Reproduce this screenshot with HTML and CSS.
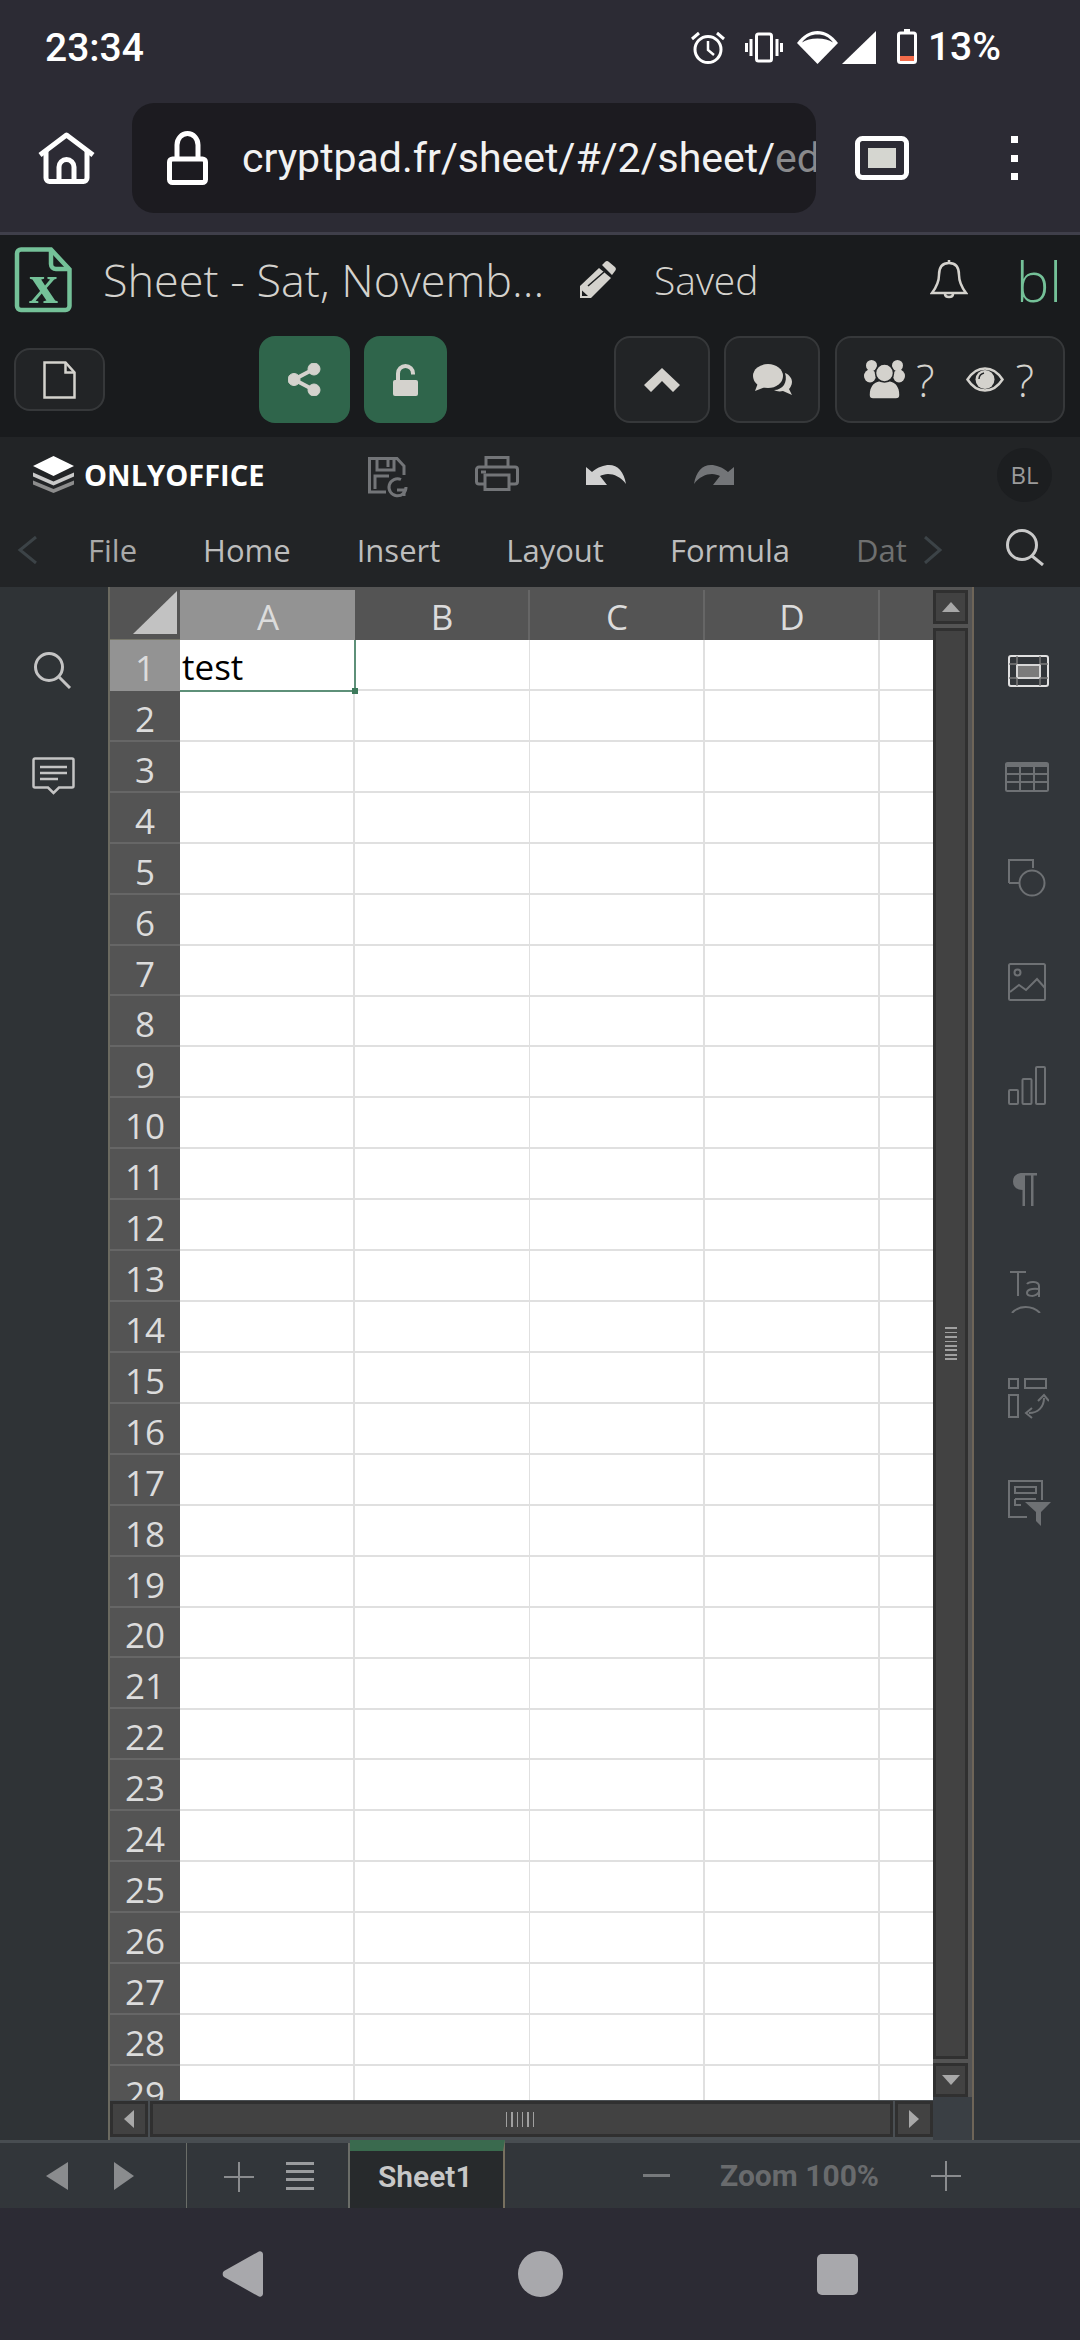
FILE: index.html
```html
<!DOCTYPE html>
<html lang="en">
<head>
<meta charset="utf-8">
<title>Sheet</title>
<link rel="stylesheet" href="styles.css">
</head>
<body>
<header class="status">
  <span class="time">23:34</span>
  <div class="status-icons">
    <svg class="s-alarm" width="36" height="33" viewBox="0 0 36 33" fill="none" stroke="#fff" stroke-width="3"><circle cx="18" cy="18.500" r="13"/><path d="M18 10v9l6 5" stroke-width="2.500"/><path d="M2 8l7-6M34 8l-7-6"/></svg>
    <svg class="s-vib" width="38" height="31" viewBox="0 0 38 31" fill="none" stroke="#fff" stroke-width="3"><rect x="11.500" y="2" width="15" height="27" rx="2"/><path d="M6 7v17M32 7v17M1.500 11v9M36.500 11v9"/></svg>
    <svg class="s-wifi" width="41" height="33" viewBox="0 0 41 33"><path d="M20.500 33 0 12C6 4 13 0 20.500 0S35 4 41 12z" fill="#fff"/><path d="M5 11.500C9 6 14 3.500 20.500 3.500S32 6 36 11.500C32 9 27 7.500 20.500 7.500S9 9 5 11.500z" fill="#2c2b34"/></svg>
    <svg class="s-sig" width="34" height="33" viewBox="0 0 34 33"><path d="M34 0v33H0z" fill="#fff"/></svg>
    <svg class="s-bat" width="20" height="35" viewBox="0 0 20 35" fill="none"><path d="M7 0h6v3H7z" fill="#fff"/><rect x="1.500" y="4" width="17" height="29.500" rx="2" stroke="#fff" stroke-width="3"/><rect x="3" y="27" width="14" height="5" fill="#f26b4a"/></svg>
    <span class="pct">13%</span>
  </div>
</header>
<nav class="addr">
  <svg class="a-home" width="57" height="52" viewBox="0 0 57 52" fill="none" stroke="#fff" stroke-width="5" stroke-linejoin="round"><path d="M2 23 28.500 3 55 23"/><path d="M8 19v27a3.500 3.500 0 0 0 3.500 3.500h34A3.500 3.500 0 0 0 49 46V19"/><path d="M21 49V35a7.500 7.500 0 0 1 15 0v14"/></svg>
  <div class="url">
    <svg class="a-lock" width="41" height="54" viewBox="0 0 41 54" fill="none" stroke="#fff" stroke-width="5"><path d="M10 28V14a10.500 11.500 0 0 1 21 0v14"/><rect x="2.500" y="28" width="36" height="23.500" rx="3"/></svg>
    <span class="url-text">cryptpad.fr/sheet/#/2/sheet/<span class="url-fade">ed</span></span>
  </div>
  <svg class="a-tab" width="54" height="44" viewBox="0 0 54 44"><rect x="2.500" y="2.500" width="49" height="39" rx="5" fill="none" stroke="#fff" stroke-width="5"/><rect x="13" y="12" width="28" height="20" fill="#d5d6d0"/></svg>
  <div class="a-dots"><i></i><i></i><i></i></div>
</nav>
<div class="chrome-line"></div>

<section class="cp">
  <div class="cp-top">
    <svg class="c-file" width="57" height="65" viewBox="0 0 57 65" fill="none" stroke="#74c198" stroke-width="4.500"><path d="M7 2.500h29l18.500 20V59a4 4 0 0 1-4 4H6a4 4 0 0 1-4-4V6.500a4 4 0 0 1 4-4z"/><path d="M36 2.500V17a5 5 0 0 0 5 5h13.500"/><text x="28.500" y="56" text-anchor="middle" class="c-x">x</text></svg>
    <span class="c-title">Sheet - Sat, Novemb...</span>
    <svg class="c-pen" width="36" height="37" viewBox="0 0 36 37"><path d="M22 4l3-3a3 3 0 0 1 4 0l6 5a3 3 0 0 1 0 4l-3 4z" fill="#d4d2cd"/><path d="M19 7l12 10-20 20H0V25z" fill="#d4d2cd"/><path d="M8 25 24 11" stroke="#191b1d" stroke-width="1.500"/><path d="M2 29.500V35h6z" fill="#191b1d"/></svg>
    <span class="c-saved">Saved</span>
    <svg class="c-bell" width="38" height="42" viewBox="0 0 38 42" fill="none" stroke="#d4d2cd" stroke-width="2.500"><path d="M19 4c-7 0-10 5-10 12 0 8-4 14-7 18h34c-3-4-7-10-7-18 0-7-3-12-10-12z"/><path d="M19 1v3M15 35c0 4 8 4 8 0"/></svg>
    <span class="c-user">bl</span>
  </div>
  <div class="cp-bot">
    <div class="btn b-doc"><svg width="33" height="38" viewBox="0 0 33 38" fill="none" stroke="#d4d2cd" stroke-width="2.500"><path d="M1.500 1.500h21l9 10v25h-30z"/><path d="M22.500 1.500v10h9"/></svg></div>
    <div class="btn-g b-share"><svg width="33" height="33" viewBox="0 0 33 33" fill="#d4d2cd" stroke="#d4d2cd"><circle cx="6" cy="16.500" r="6"/><circle cx="26" cy="6" r="6"/><circle cx="26" cy="27" r="6"/><path d="M6 16.500 26 6M6 16.500 26 27" stroke-width="4"/></svg></div>
    <div class="btn-g b-lock"><svg width="25" height="32" viewBox="0 0 25 32"><path d="M5 17V9.500a7.500 7.500 0 0 1 15 0v1" fill="none" stroke="#d4d2cd" stroke-width="4"/><rect y="16" width="25" height="16" rx="2" fill="#d4d2cd"/></svg></div>
    <div class="btn b-up"><svg width="36" height="24" viewBox="0 0 36 24"><path d="M18 0l18 17-7 7-11-11L7 24l-7-7z" fill="#d4d2cd"/></svg></div>
    <div class="btn b-chat"><svg width="39" height="31" viewBox="0 0 39 31" fill="#d4d2cd"><ellipse cx="15" cy="12" rx="15" ry="12"/><path d="M5 19l-3 8 10-4z"/><path d="M32 9c5 2 7 6 7 9 0 3-2 6-3 7l3 6-9-4c-4 1-7 0-9-1 9 0 14-8 11-17z"/></svg></div>
    <div class="btn b-users">
      <svg width="41" height="39" viewBox="0 0 41 39" fill="#d4d2cd"><circle cx="7.500" cy="5.500" r="5.500"/><circle cx="33.500" cy="5.500" r="5.500"/><ellipse cx="6" cy="16" rx="6" ry="6.500"/><ellipse cx="35" cy="16" rx="6" ry="6.500"/><path d="M5 35C5 25 11 20 20.500 20S36 25 36 35c0 3-1.500 4-4 4H9c-2.500 0-4-1-4-4z" stroke="#222426" stroke-width="1.500"/><circle cx="20.500" cy="13" r="9" stroke="#222426" stroke-width="1.500"/></svg>
      <span class="q q1">?</span>
      <svg class="eye" width="38" height="25" viewBox="0 0 38 25" fill="none" stroke="#d4d2cd" stroke-width="2.500"><path d="M1.500 12.500C7 4 13 1.500 19 1.500s12 2.500 17.500 11C31 21 25 23.500 19 23.500S7 21 1.500 12.500z"/><circle cx="19" cy="12.500" r="9.500" fill="#d4d2cd" stroke="none"/><path d="M13 12a6.500 6.500 0 0 1 5-6" stroke="#222426" stroke-width="1.500"/></svg>
      <span class="q q2">?</span>
    </div>
  </div>
</section>

<section class="oo">
  <div class="oo-top">
    <svg class="o-logo" width="41" height="37" viewBox="0 0 41 37"><path d="M20.500 0 41 10 20.500 20 0 10z" fill="#fff"/><path d="M0 16.500l20.500 9 20.500-9v4l-20.500 9-20.500-9z" fill="#c9c9c9"/><path d="M0 24.500l20.500 8.500 20.500-8.500v4L20.500 37 0 28.500z" fill="#8c8c8c"/></svg>
    <span class="o-name">ONLYOFFICE</span>
    <svg class="o-save" width="42" height="41" viewBox="0 0 42 41" fill="none" stroke="#737578" stroke-width="3"><path d="M18 35H1.500V1.500H29L36 9v9"/><path d="M9 2v11h17V2M20 3v7"/><path d="M7 32V19h14"/><path d="M38 30a8.500 8.500 0 1 1-5-7.500"/><path d="M36 39v-6h-7" stroke-width="3"/></svg>
    <svg class="o-print" width="44" height="35" viewBox="0 0 44 35" fill="none" stroke="#737578" stroke-width="3"><path d="M11 11V1.500h22V11M10 28H4a2.500 2.500 0 0 1-2.500-2.500v-12A2.500 2.500 0 0 1 4 11h36a2.500 2.500 0 0 1 2.500 2.500v12A2.500 2.500 0 0 1 40 28h-6"/><rect x="10" y="19" width="24" height="14.500"/><path d="M6 16h5"/></svg>
    <svg class="o-undo" width="40" height="20" viewBox="0 0 40 20"><path d="M0 20V2l6 5C12 2 18 0 23 0c9 0 15 7 17 19-5-7-12-10-18-10-3 0-6 1-8 2l7 9z" fill="#d0d0d0"/></svg>
    <svg class="o-redo" width="40" height="20" viewBox="0 0 40 20"><path d="M40 20V2l-6 5C28 2 22 0 17 0 8 0 2 7 0 19c5-7 12-10 18-10 3 0 6 1 8 2l-7 9z" fill="#737578"/></svg>
    <span class="o-bl">BL</span>
  </div>
  <div class="oo-tabs">
    <svg class="t-l" width="21" height="28" viewBox="0 0 21 28" fill="none" stroke="#3c4347" stroke-width="3"><path d="M19 1 3 14l16 13"/></svg>
    <div class="t-list">
      <span class="t t-dim">File</span><span class="t">Home</span><span class="t">Insert</span><span class="t">Layout</span><span class="t">Formula</span><span class="t t-fade">Dat</span>
    </div>
    <svg class="t-r" width="19" height="28" viewBox="0 0 19 28" fill="none" stroke="#3c4347" stroke-width="3"><path d="M2 1l15 13L2 27"/></svg>
    <svg class="t-s" width="40" height="37" viewBox="0 0 40 37" fill="none" stroke="#c9c9c9" stroke-width="3"><circle cx="17" cy="16" r="14.500"/><path d="M27 27l11 9"/></svg>
  </div>
</section>

<main class="main">
  <aside class="left">
    <svg class="l-search" width="38" height="37" viewBox="0 0 38 37" fill="none" stroke="#c4c4c4" stroke-width="3"><circle cx="15" cy="15" r="13.500"/><path d="M25 25l11 11"/></svg>
    <svg class="l-comment" width="43" height="38" viewBox="0 0 43 38" fill="none" stroke="#c4c4c4" stroke-width="2.500"><path d="M3 1.500h37A1.500 1.500 0 0 1 41.500 3v26a1.500 1.500 0 0 1-1.500 1.500H27L21.500 36 16 30.500H3A1.500 1.500 0 0 1 1.500 29V3A1.500 1.500 0 0 1 3 1.500z"/><path d="M8 10h27M8 16h27M8 22h18"/></svg>
  </aside>
  <div class="frame">
    <div class="grid">
      <div class="head">
        <div class="corner"><svg width="44" height="43" viewBox="0 0 44 43"><path d="M44 0v43H0z" fill="#c2c2c2"/></svg></div>
        <div class="col col-on">A</div><div class="col">B</div><div class="col">C</div><div class="col">D</div><div class="col col-e"></div>
      </div>
      <div class="body">
        <div class="rows">
          <div class="r r-on">1</div><div class="r">2</div><div class="r">3</div><div class="r">4</div><div class="r">5</div><div class="r">6</div><div class="r">7</div><div class="r">8</div><div class="r">9</div><div class="r">10</div><div class="r">11</div><div class="r">12</div><div class="r">13</div><div class="r">14</div><div class="r">15</div><div class="r">16</div><div class="r">17</div><div class="r">18</div><div class="r">19</div><div class="r">20</div><div class="r">21</div><div class="r">22</div><div class="r">23</div><div class="r">24</div><div class="r">25</div><div class="r">26</div><div class="r">27</div><div class="r">28</div><div class="r">29</div>
        </div>
        <div class="cells">
          <div class="a1">test<i class="handle"></i></div>
        </div>
      </div>
      <div class="hs">
        <div class="sb"><svg width="10" height="18" viewBox="0 0 10 18"><path d="M10 0v18L0 9z" fill="#a8a8a8"/></svg></div>
        <div class="sb thumb-h"><div class="grip-h"></div></div>
        <div class="sb"><svg width="10" height="18" viewBox="0 0 10 18"><path d="M0 0v18l10-9z" fill="#a8a8a8"/></svg></div>
      </div>
    </div>
    <div class="vs">
      <div class="sb sb-v"><svg width="18" height="10" viewBox="0 0 18 10"><path d="M0 10h18L9 0z" fill="#a8a8a8"/></svg></div>
      <div class="sb thumb-v"><div class="grip-v"></div></div>
      <div class="sb sb-v"><svg width="18" height="10" viewBox="0 0 18 10"><path d="M0 0h18L9 10z" fill="#a8a8a8"/></svg></div>
    </div>
  </div>
  <aside class="right">
    <svg class="ri ri-1" width="41" height="32" viewBox="0 0 41 32" fill="none"><rect x="1" y="1" width="39" height="30" rx="2" stroke="#e0e0e0" stroke-width="2"/><rect x="9" y="10" width="23" height="13" fill="#7b7b7b" stroke="#d6d6d6" stroke-width="2"/><path d="M9 1v8M32 1v8M9 23v8M32 23v8M1 9h8M32 9h8M1 23h8M32 23h8" stroke="#7b7b7b" stroke-width="1.500"/></svg>
    <svg class="ri ri-2" width="44" height="30" viewBox="0 0 44 30" fill="none" stroke="#6e7174" stroke-width="2"><rect x="1" y="1" width="42" height="28" rx="1.500"/><path d="M1 3h42" stroke-width="4"/><path d="M1 12h42M1 20h42M15 4v25M29 4v25"/></svg>
    <svg class="ri ri-3" width="38" height="38" viewBox="0 0 38 38" fill="none" stroke="#6e7174" stroke-width="2"><path d="M1 24V1h24v8"/><path d="M1 24h10"/><circle cx="24" cy="24" r="12.500"/></svg>
    <svg class="ri ri-4" width="38" height="38" viewBox="0 0 38 38" fill="none" stroke="#6e7174" stroke-width="2"><rect x="1" y="1" width="36" height="36" rx="1.500"/><circle cx="9.500" cy="9.500" r="3"/><path d="M2 29l9-7 7 5 11-11 8 9"/></svg>
    <svg class="ri ri-5" width="38" height="39" viewBox="0 0 38 39" fill="none" stroke="#6e7174" stroke-width="2"><rect x="1" y="24" width="9" height="14" rx="1"/><rect x="14.500" y="13" width="9" height="25" rx="1"/><rect x="28" y="1" width="9" height="37" rx="1"/></svg>
    <svg class="ri ri-6" width="24" height="33" viewBox="0 0 24 33" fill="#6e7174"><path d="M24 0v2.500h-3.500V33H18V2.500h-6V33H9.500V17C4 17 0 14 0 8.500S4 0 9.500 0z"/></svg>
    <svg class="ri ri-7" width="32" height="43" viewBox="0 0 32 43" fill="none" stroke="#6e7174" stroke-width="2"><path d="M0 2h16M8 2v24"/><path d="M17 14c2-3 12-3 12 2v11M29 19c-8-1-12 1-12 4s8 5 12-1"/><path d="M2 43c7-8 20-8 28 0"/></svg>
    <svg class="ri ri-8" width="41" height="41" viewBox="0 0 41 41" fill="none" stroke="#6e7174" stroke-width="2"><rect x="1" y="1" width="9" height="9"/><rect x="17" y="1" width="21" height="9"/><rect x="1" y="17" width="9" height="22"/><path d="M36 20c0 9-6 15-15 15"/><path d="M30 23l6-6 5 6M24 30l-6 5 6 5"/></svg>
    <svg class="ri ri-9" width="43" height="46" viewBox="0 0 43 46" fill="none" stroke="#6e7174" stroke-width="2"><path d="M34 20V1H1v36h18"/><path d="M7 7h21v6H7zM7 19h21M7 19v6h6"/><path d="M17 22h26L33 32v14l-5-5v-9z" fill="#6e7174" stroke="none"/></svg>
  </aside>
</main>

<footer class="bar">
  <div class="bar-nav">
    <svg width="22" height="28" viewBox="0 0 22 28"><path d="M22 0v28L0 14z" fill="#8a8c8e"/></svg>
    <svg class="bar-next" width="20" height="28" viewBox="0 0 20 28"><path d="M0 0v28l20-14z" fill="#8a8c8e"/></svg>
  </div>
  <div class="bar-tools">
    <svg width="30" height="30" viewBox="0 0 30 30" fill="none" stroke="#8a8c8e" stroke-width="2"><path d="M15 0v30M0 15h30"/></svg>
    <svg width="28" height="28" viewBox="0 0 28 28" fill="#9a9c9e"><path d="M0 0h28v3H0zM0 8h28v3H0zM0 16h28v3H0zM0 25h28v3H0z"/></svg>
  </div>
  <div class="sheet-tab"><span>Sheet1</span></div>
  <div class="zoom">
    <i class="z-minus"></i>
    <span class="z-text">Zoom 100%</span>
    <svg width="30" height="30" viewBox="0 0 30 30" fill="none" stroke="#8a8c8e" stroke-width="2"><path d="M15 0v30M0 15h30"/></svg>
  </div>
</footer>

<div class="sysnav">
  <svg class="n-back" width="41" height="46" viewBox="0 0 41 46"><path d="M41 3v40a3 3 0 0 1-5 2L2 26a4 4 0 0 1 0-6L36 1a3 3 0 0 1 5 2z" fill="#a8a8ac"/></svg>
  <i class="n-home"></i>
  <i class="n-rec"></i>
</div>
</body>
</html>
```
FILE: styles.css
```css
* { box-sizing: border-box; }
html, body { margin: 0; padding: 0; }
body { width: 1080px; height: 2340px; overflow: hidden; display: flex; flex-direction: column; background: #2c2b34; font-family: "Open Sans", sans-serif; }
svg { display: block; flex: none; }
i { display: block; }

.status { height: 84px; padding: 10px 79px 0 45px; display: flex; align-items: center; justify-content: space-between; color: #fff; font-family: Roboto, sans-serif; font-size: 39px; font-weight: 500; background: #2c2b34; }
.time { margin-top: 2px; }
.status-icons { display: flex; align-items: center; }
.s-vib { margin-left: 19px; }
.s-wifi { margin-left: 14px; }
.s-sig { margin-left: 4px; }
.s-bat { margin-left: 21px; margin-top: -1px; }
.pct { margin-left: 11px; }

.addr { height: 148px; display: flex; align-items: center; padding-left: 38px; background: #2c2b34; }
.url { width: 684px; height: 110px; margin-left: 37px; background: #1c1b20; border-radius: 22px; display: flex; align-items: center; padding-left: 35px; overflow: hidden; white-space: nowrap; }
.url-text { margin-left: 34px; color: #f2f2f2; font-family: Roboto, sans-serif; font-size: 41px; }
.url-fade { color: #8a8a8c; }
.a-tab { margin-left: 39px; }
.a-dots { margin-left: 102px; width: 7px; height: 44px; display: flex; flex-direction: column; justify-content: space-between; }
.a-dots i { width: 7px; height: 7px; background: #fff; }
.chrome-line { height: 3px; background: #3f3f4a; }

.cp { height: 202px; background: #191b1d; color: #d4d2cd; }
.cp-top { height: 101px; display: flex; align-items: center; padding: 0 0 12px 15px; }
.c-file { overflow: visible; }
.c-x { font-family: "Liberation Serif", serif; font-size: 58px; font-weight: 700; fill: #74c198; stroke: none; }
.c-title { margin-left: 31px; width: 477px; flex: none; font-size: 45px; font-weight: 300; white-space: nowrap; }
.c-saved { margin-left: 38px; width: 276px; flex: none; font-size: 39px; font-weight: 300; }
.c-bell { margin-right: 48px; }
.c-user { color: #74c198; font-size: 56px; font-weight: 300; line-height: 56px; }
.cp-bot { height: 87px; display: flex; align-items: center; padding-left: 14px; }
.btn, .btn-g { display: flex; align-items: center; justify-content: center; height: 87px; border-radius: 16px; }
.btn { background: #222426; border: 2px solid #36383a; }
.btn-g { background: #2f654b; }
.b-doc { width: 91px; height: 63px; }
.b-share { width: 91px; margin-left: 154px; }
.b-lock { width: 83px; margin-left: 14px; }
.b-up { width: 96px; margin-left: 167px; }
.b-chat { width: 96px; margin-left: 14px; }
.b-users { width: 230px; margin-left: 15px; justify-content: flex-start; padding-left: 27px; }
.q { font-size: 44px; font-weight: 300; line-height: 44px; margin-left: 11px; }
.eye { margin-left: 31px; }
.q2 { margin-left: 12px; }

.oo { height: 150px; background: #222426; }
.oo-top { height: 75px; display: flex; align-items: center; padding-left: 33px; }
.o-name { margin-left: 10px; width: 103px; flex: none; color: #fff; font-size: 29px; font-weight: 700; white-space: nowrap; }
.o-save { margin-left: 181px; margin-top: 5px; }
.o-print { margin-left: 65px; margin-top: -3px; }
.o-undo { margin-left: 67px; }
.o-redo { margin-left: 68px; }
.o-bl { margin-left: 263px; width: 55px; height: 54px; border-radius: 50%; background: #1c1e20; color: #9b9b9b; font-size: 24px; display: flex; align-items: center; justify-content: center; }
.oo-tabs { height: 75px; display: flex; align-items: center; padding-left: 17px; }
.t-list { flex: none; margin-left: 50px; width: 818px; display: flex; gap: 66px; font-size: 31px; color: #bdbdbd; }
.t-dim { color: #a9a9a9; }
.t-fade { color: #6f7070; }
.t-r { margin-left: 17px; margin-right: 63px; }
.t-s { margin-top: -4px; }

.main { height: 1553px; display: flex; background: #32363a; }
.left { width: 108px; flex: none; padding: 65px 0 0 33px; background: #2f3336; }
.l-search { margin-left: 1px; }
.l-comment { margin-top: 68px; margin-left: -1px; }
.frame { width: 866px; flex: none; display: flex; padding-top: 3px; background: #545454; border-left: 2px solid #6b6a60; border-right: 2px solid #6e6558; }
.grid { width: 823px; flex: none; display: flex; flex-direction: column; }
.head { height: 50px; display: flex; color: #dcdcdc; font-size: 35px; }
.corner { width: 70px; flex: none; padding: 1px 0 0 23px; border-bottom: 1px solid #76766a; }
.col { width: 175px; flex: none; background: #545454; border-right: 2px solid #666; display: flex; align-items: center; justify-content: center; padding-top: 3px; padding-left: 1px; }
.col-on { background: #939393; border-right: 0; }
.col-e { width: 54px; border: 0; }
.body { flex: 1; display: flex; overflow: hidden; min-height: 0; }
.rows { width: 70px; flex: none; background: #545454; color: #dcdcdc; font-size: 35px; }
.r { height: 50.93px; display: flex; align-items: center; justify-content: center; border-bottom: 2px solid #666; padding-top: 6px; }
.r-on { background: #939393; border-bottom-color: #939393; }
.cells { flex: 1; position: relative; background-color: #fff; background-image: repeating-linear-gradient(to right, transparent 0 173.5px, #e0e0e0 173.5px 175px), repeating-linear-gradient(to bottom, transparent 0 48.93px, #e0e0e0 48.93px 50.93px); }
.a1 { position: absolute; left: 0; top: 0; width: 175.5px; height: 52px; border-right: 2px solid #5e9079; border-bottom: 2px solid #5e9079; background: #fff; color: #000; font-size: 35px; line-height: 54px; padding-left: 2px; }
.handle { position: absolute; right: -4px; bottom: -4px; width: 6px; height: 6px; background: #3d7a5c; }
.hs { height: 40px; flex: none; display: flex; gap: 2px; padding: 1px 0 3px 0; background: #4a4f53; }
.sb { background: #424242; border: 3px solid #303030; display: flex; align-items: center; justify-content: center; }
.hs .sb { width: 38px; height: 36px; }
.hs .thumb-h { width: 743px; }
.grip-h { width: 32px; height: 15px; background: repeating-linear-gradient(to right, #a0a0a0 0 1.500px, transparent 1.500px 5.300px); }
.vs { width: 39px; flex: none; display: flex; flex-direction: column; padding: 0 4px 43px 0; gap: 4px; background: linear-gradient(to bottom, #545454 0 1507px, #3a3f44 1507px); }
.sb-v { height: 34px; flex: none; }
.thumb-v { flex: 1; }
.grip-v { width: 12px; height: 33px; background: repeating-linear-gradient(to bottom, #a0a0a0 0 1.500px, transparent 1.500px 4.500px); }
.right { flex: 1; padding: 68px 0 0 34px; background: #32363a; }
.ri-2 { margin-top: 75px; margin-left: -3px; }
.ri-3 { margin-top: 67px; }
.ri-4 { margin-top: 66px; }
.ri-5 { margin-top: 65px; }
.ri-6 { margin-top: 68px; margin-left: 5px; }
.ri-7 { margin-top: 64px; margin-left: 2px; }
.ri-8 { margin-top: 65px; }
.ri-9 { margin-top: 61px; }

.bar { height: 68px; display: flex; background: #32363a; border-top: 3px solid #484d51; }
.bar-nav { width: 187px; flex: none; border-right: 1px solid #6a6d68; padding: 19px 0 0 46px; display: flex; }
.bar-next { margin-left: 46px; }
.bar-tools { width: 163px; flex: none; padding: 19px 0 0 37px; display: flex; gap: 32px; border-right: 2px solid #6a6d68; }
.sheet-tab { width: 155px; flex: none; background: #272a2c; border-right: 2px solid #77705f; border-top: 11px solid #3a6a4e; margin-top: -3px; color: #c8c8c8; font-size: 30px; font-weight: 600; padding: 0 0 7px 28px; display: flex; align-items: center; font-family: Roboto, sans-serif; }
.zoom { flex: 1; display: flex; align-items: center; padding-left: 138px; color: #696b6d; font-family: Roboto, sans-serif; font-size: 30px; font-weight: 700; }
.z-minus { width: 27px; height: 3px; background: #777a7c; }
.z-text { margin-left: 50px; width: 211px; }

.sysnav { flex: 1; display: flex; align-items: center; padding: 0 0 0 222px; }
.n-home { width: 45px; height: 46px; border-radius: 50%; background: #a8a8ac; margin-left: 255px; }
.n-rec { width: 41px; height: 41px; border-radius: 5px; background: #a8a8ac; margin-left: 254px; }
```
